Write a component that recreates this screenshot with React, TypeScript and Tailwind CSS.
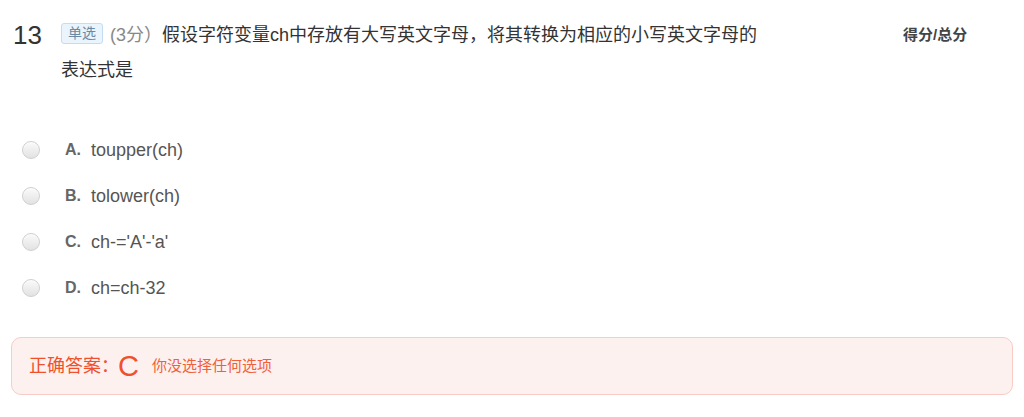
const options = [
  { key: 'A', text: 'toupper(ch)' },
  { key: 'B', text: 'tolower(ch)' },
  { key: 'C', text: "ch-='A'-'a'" },
  { key: 'D', text: 'ch=ch-32' },
]

const font = { fontFamily: '"Liberation Sans", "Noto Sans CJK SC", sans-serif' }

export default function App() {
  return (
    <div className="w-[1024px] h-[417px] bg-white text-[#333]" style={font}>
      <div className="flex pt-[18px]">
        <div className="w-[61px] pl-[13px] text-[26px] leading-[34px] text-[#333]">13</div>
        <div className="w-[700px] text-[18px] leading-[35px] text-[#333]">
          <div className="flex items-center h-[35px]">
            <span className="h-[21px] px-[6px] mr-[7px] -mt-[4px] rounded-[3px] border border-[#c3def3] bg-[#e9f4fd] text-[14px] leading-[19px] text-[#6a8aa3]">
              单选
            </span>
            <span className="text-[#888]">(3分）</span>
            <span>假设字符变量ch中存放有大写英文字母，将其转换为相应的小写英文字母的</span>
          </div>
          <div>表达式是</div>
        </div>
        <div className="ml-[142px] pt-[6px] text-[15px] font-bold text-[#444]">得分/总分</div>
      </div>

      <div className="flex flex-col gap-[22px] mt-[50px] pl-[22px]">
        {options.map((o) => (
          <div key={o.key} className="flex items-center h-[24px]">
            <span className="w-[18px] h-[18px] rounded-full border border-[#cfcfcf] bg-gradient-to-b from-[#fafafa] to-[#e2e2e2] shadow-[inset_0_1px_1px_rgba(255,255,255,0.8)]" />
            <span className="ml-[25px] w-[26px] text-[16px] font-bold text-[#666]">{o.key}.</span>
            <span className="text-[18px] text-[#555]">{o.text}</span>
          </div>
        ))}
      </div>

      <div className="mx-[11px] mt-[37px] h-[58px] rounded-[10px] border border-[#f8cbc6] bg-[#fdf1f0] flex items-center pl-[17px]">
        <span className="text-[18px] text-[#f0502c]">正确答案：</span>
        <span className="-ml-[1px] text-[29px] leading-none text-[#f0502c]">C</span>
        <span className="ml-[13px] text-[15px] text-[#f0603a]">你没选择任何选项</span>
      </div>
    </div>
  )
}
